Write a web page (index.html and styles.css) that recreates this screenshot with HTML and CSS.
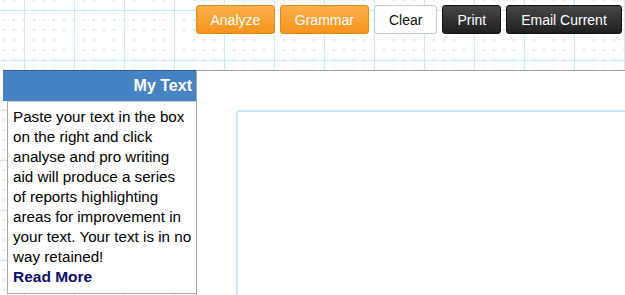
FILE: index.html
```html
<!DOCTYPE html>
<html>
<head>
<meta charset="utf-8">
<link rel="stylesheet" href="styles.css">
</head>
<body>
<div class="toolbar">
  <button class="btn orange first">Analyze</button>
  <button class="btn orange">Grammar</button>
  <button class="btn white">Clear</button>
  <button class="btn dark">Print</button>
  <button class="btn dark">Email Current</button>
  <button class="btn dark">Save</button>
</div>
<div class="main">
  <aside class="sidebar">
    <div class="side-head">My Text</div>
    <div class="side-body">Paste your text in the box<br>on the right and click<br>analyse and pro writing<br>aid will produce a series<br>of reports highlighting<br>areas for improvement in<br>your text. Your text is in no<br>way retained!<a class="more" href="#">Read More</a></div>
  </aside>
  <section class="content">
    <div class="editor"></div>
  </section>
</div>
</body>
</html>
```
FILE: styles.css
```css
html, body {
  margin: 0;
  padding: 0;
  height: 100%;
  overflow: hidden;
}
body {
  font-family: "Liberation Sans", Arial, sans-serif;
  background-color: #fff;
  background-image:
    linear-gradient(to right, #c6ecf9 1px, transparent 1px),
    linear-gradient(to bottom, #c6ecf9 1px, transparent 1px),
    radial-gradient(circle, #cdeefa 0.8px, transparent 0.9px);
  background-size: 50px 50px, 50px 50px, 10px 10px;
  background-position: 24px 0, 0 10px, -1px 5px;
}
.toolbar {
  display: flex;
  gap: 5px;
  padding: 5px 0 0 196px;
  height: 70px;
  box-sizing: border-box;
  white-space: nowrap;
  overflow: hidden;
}
.btn {
  flex: none;
  height: 29px;
  padding: 0 14px;
  border-radius: 3px;
  font-family: "Liberation Sans", Arial, sans-serif;
  font-size: 14px;
  cursor: pointer;
}
.first {
  padding: 0 13.5px;
}
.orange {
  color: #fff;
  background: linear-gradient(to bottom, #fbb04a, #f7931c);
  border: 1px solid #e08a1a;
}
.white {
  color: #111;
  background: #fff;
  border: 1px solid #c8c8c8;
}
.dark {
  color: #fff;
  background: linear-gradient(to bottom, #474747, #1f1f1f);
  border: 1px solid #111;
}
.main {
  display: flex;
  height: 225px;
}
.sidebar {
  width: 193px;
  margin-left: 3px;
  flex: none;
}
.side-head {
  height: 31px;
  box-sizing: border-box;
  background: #4583c5;
  border-top: 1px solid #2e5f96;
  color: #fff;
  font-weight: bold;
  font-size: 16px;
  text-align: right;
  padding: 6px 4px 0 0;
}
.side-body {
  margin-left: 4px;
  background: #fff;
  border-left: 1px solid #a8a8a8;
  border-bottom: 1px solid #a8a8a8;
  border-top: 1px solid #d0d0d0;
  padding: 5px 0 0 5px;
  font-size: 15.2px;
  line-height: 20px;
  color: #000;
  height: 193px;
  box-sizing: border-box;
  white-space: nowrap;
}
.more {
  display: block;
  font-weight: bold;
  font-size: 15.5px;
  color: #0b0b6a;
  text-decoration: none;
}
.content {
  flex: 1;
  background: #fff;
  border-left: 1px solid #a3a3a3;
  border-top: 1px solid #a3a3a3;
  padding: 39px 0 0 39px;
  box-sizing: border-box;
}
.editor {
  height: 300px;
  border-top: 2px solid #c8e6f8;
  border-left: 2px solid #c8e6f8;
  border-top-left-radius: 3px;
}
```
